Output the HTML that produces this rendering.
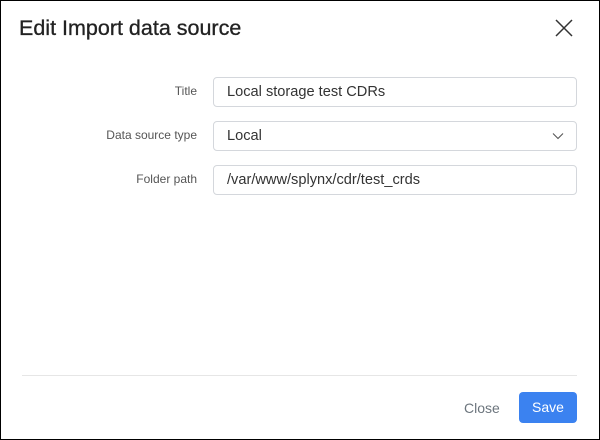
<!DOCTYPE html>
<html><head><style>
body{margin:0;width:600px;height:440px;background:#fff;font-family:"Liberation Sans",sans-serif;position:relative;overflow:hidden}
.frame{position:absolute;left:0;top:0;width:598px;height:438px;border:1px solid #000}
h1{position:absolute;left:19px;top:16px;margin:0;font-size:21.5px;font-weight:normal;color:#222;-webkit-text-stroke:0.3px #222}
.x{position:absolute;left:555px;top:19px}
.lbl{position:absolute;right:403px;font-size:12px;color:#555;text-align:right}
.inp{position:absolute;left:213px;width:362px;height:28px;border:1px solid #d4d7dc;border-radius:4px;font-size:14.6px;color:#333;line-height:28px;box-sizing:content-box}
.inp span{padding-left:13px}
.sep{position:absolute;left:22px;top:375px;width:555px;height:1px;background:#e6e6e6}
.close{position:absolute;left:464px;top:400px;font-size:14px;color:#6c757d}
.save{position:absolute;left:519px;top:392px;width:58px;height:31px;background:#3b82f0;border-radius:4px;color:#fff;font-size:14px;text-align:center;line-height:31px}
</style></head><body>
<div class="frame"></div>
<h1>Edit Import data source</h1>
<svg class="x" width="18" height="18" viewBox="0 0 18 18"><path d="M1 1L17 17M17 1L1 17" stroke="#333" stroke-width="1.5" fill="none"/></svg>
<div class="lbl" style="top:84px">Title</div>
<div class="inp" style="top:77px"><span>Local storage test CDRs</span></div>
<div class="lbl" style="top:128px">Data source type</div>
<div class="inp" style="top:121px"><span>Local</span>
<svg style="position:absolute;right:12px;top:10px" width="12" height="8" viewBox="0 0 12 8"><path d="M1 1.5L6 6.5L11 1.5" stroke="#555" stroke-width="1.1" fill="none"/></svg></div>
<div class="lbl" style="top:172px">Folder path</div>
<div class="inp" style="top:165px"><span>/var/www/splynx/cdr/test_crds</span></div>
<div class="sep"></div>
<div class="close">Close</div>
<div class="save">Save</div>
</body></html>
